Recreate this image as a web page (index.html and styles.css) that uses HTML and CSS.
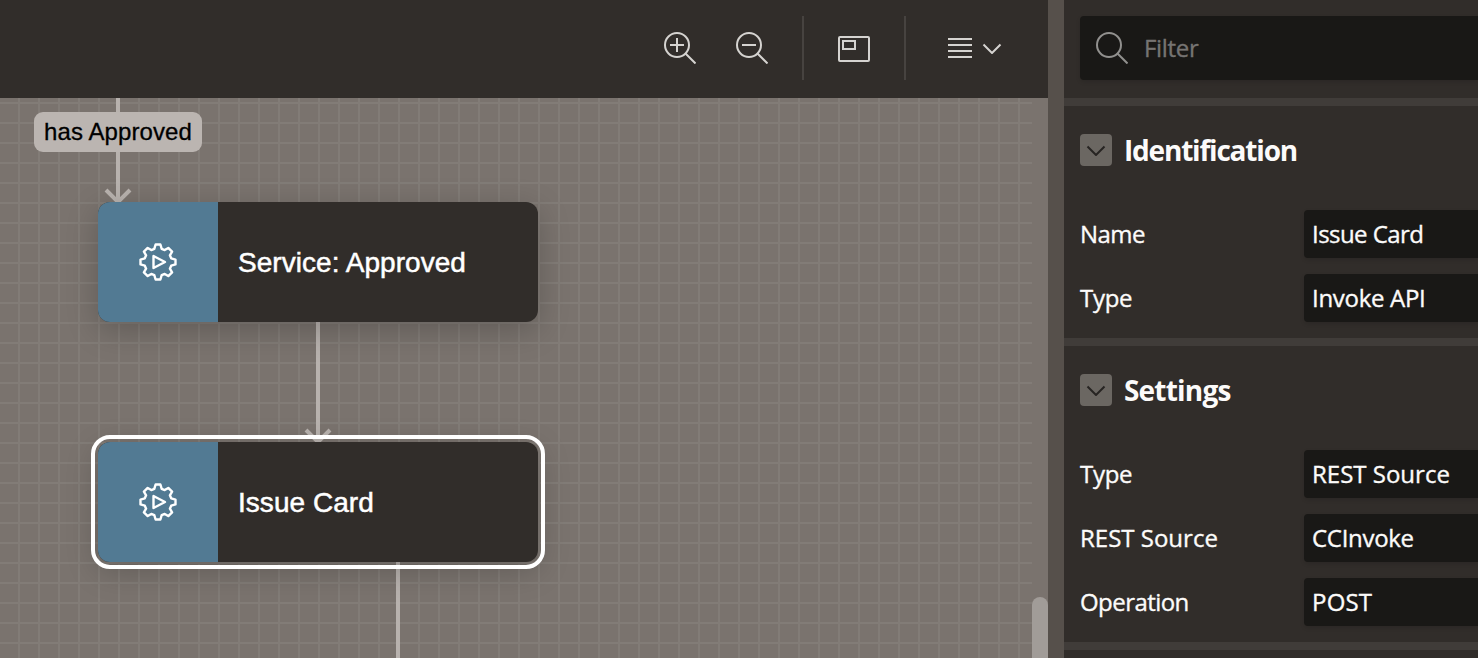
FILE: index.html
```html
<!DOCTYPE html>
<html lang="en">
<head>
<meta charset="utf-8">
<title>Workflow Designer</title>
<link rel="stylesheet" href="styles.css">
</head>
<body>
<svg class="defs" width="0" height="0">
  <defs>
    <symbol id="gear" viewBox="0 0 40 40">
      <path d="M17.600 2.500h4.800l1.300 4.300 3 1.300 3.600-2.200 3.800 3.800-2.200 3.600 1.300 3L37.500 17.600v4.800l-4.300 1.300-1.300 3 2.200 3.600-3.800 3.800-3.600-2.200-3 1.300L22.400 37.500h-4.800l-1.300-4.300-3-1.300-3.600 2.200-3.800-3.800 2.200-3.600-1.300-3L2.500 22.400v-4.800l4.300-1.300 1.300-3-2.200-3.600 3.800-3.800 3.600 2.200 3-1.300z"/>
      <path d="M15.500 14v12L27 20z"/>
    </symbol>
    <symbol id="chevron" viewBox="0 0 20 12"><path d="M1.500 2.500 10 11 18.500 2.500"/></symbol>
  </defs>
</svg>
<div class="app">
  <main class="designer">
    <div class="toolbar">
      <div class="zoom-group">
        <svg class="icon" viewBox="0 0 32 32"><circle cx="13" cy="13" r="12"/><path d="M21.500 21.500 31.500 31.500M6 13h14M13 6v14"/></svg>
        <svg class="icon" viewBox="0 0 32 32"><circle cx="13" cy="13" r="12"/><path d="M21.500 21.500 31.500 31.500M6 13h14"/></svg>
      </div>
      <div class="overview-group">
        <svg class="icon" viewBox="0 0 32 32"><rect x="1" y="5" width="30" height="24" rx="1"/><rect x="5" y="9" width="12" height="8"/></svg>
      </div>
      <div class="menu-group">
        <svg class="menu-lines" viewBox="0 0 24 20"><path d="M0 1h24M0 7h24M0 13h24M0 19h24"/></svg>
        <svg class="chevron"><use href="#chevron"/></svg>
      </div>
    </div>
    <div class="canvas">
      <div class="grid"></div>
      <svg class="links" width="1032" height="560" viewBox="0 98 1032 560">
        <path d="M118 98V200M106 190l12 12 12-12M318 322V440M306 430l12 12 12-12M398 562V658"/>
      </svg>
      <span class="link-label">has Approved</span>
      <div class="node service">
        <div class="node-icon"><svg><use href="#gear"/></svg></div>
        <div class="node-name">Service: Approved</div>
      </div>
      <div class="node issue">
        <div class="node-icon"><svg><use href="#gear"/></svg></div>
        <div class="node-name">Issue Card</div>
      </div>
      <div class="scroll-thumb"></div>
    </div>
  </main>
  <div class="splitter"></div>
  <aside class="properties">
    <div class="filter-bar">
      <div class="filter">
        <svg class="icon" viewBox="0 0 32 32"><circle cx="13" cy="13" r="12"/><path d="M21.500 21.500 31.500 31.500"/></svg>
        <span>Filter</span>
      </div>
    </div>
    <section class="group">
      <h2><i class="toggle"><svg class="chevron"><use href="#chevron"/></svg></i><span class="tight">Identification</span></h2>
      <div class="row"><span class="snug">Name</span><span class="field snug">Issue Card</span></div>
      <div class="row"><span>Type</span><span class="field">Invoke API</span></div>
    </section>
    <section class="group">
      <h2><i class="toggle"><svg class="chevron"><use href="#chevron"/></svg></i><span>Settings</span></h2>
      <div class="row"><span>Type</span><span class="field caps">REST Source</span></div>
      <div class="row"><span class="caps">REST Source</span><span class="field">CCInvoke</span></div>
      <div class="row"><span class="snug">Operation</span><span class="field wide">POST</span></div>
    </section>
    <section class="group"></section>
  </aside>
</div>
</body>
</html>
```

FILE: styles.css
```css
* { box-sizing: border-box; }
body { margin: 0; overflow: hidden; background: #312d2a; }
.defs { position: absolute; }
svg { display: block; fill: none; stroke: currentColor; stroke-width: 2; }
.app { display: flex; width: 1478px; height: 658px; overflow: hidden; }
.designer { flex: 0 0 1048px; display: flex; flex-direction: column; }

.toolbar { height: 98px; padding: 16px 14px 18px 0; display: flex; justify-content: flex-end; background: #312d2a; color: #d5d3d0; }
.toolbar > div { display: flex; align-items: center; height: 64px; }
.icon { width: 32px; height: 32px; flex: none; }
.zoom-group { gap: 40px; padding-right: 34px; border-right: 2px solid #474340; }
.overview-group { padding: 0 34px; border-right: 2px solid #474340; }
.menu-group { padding: 0 32px 0 42px; gap: 10px; }
.menu-lines { width: 24px; height: 20px; }
.chevron { width: 20px; height: 12px; overflow: visible; }

.canvas { position: relative; flex: 1; overflow: hidden; background: #7a736e; }
.grid {
  height: 100%; margin-right: 16px;
  background-image: linear-gradient(#827c77 2px, transparent 2px), linear-gradient(90deg, #827c77 2px, transparent 2px);
  background-size: 20px 20px; background-position: 18px 4px;
}
.links { position: absolute; left: 0; top: 0; color: #b8b2ae; stroke-width: 4; }
.link-label {
  position: absolute; left: 34px; top: 14px; width: 168px; height: 40px; border-radius: 9px;
  background: #bbb5b1; color: #000; text-align: center;
  font: 24px/40px "Liberation Sans", Arial, sans-serif; letter-spacing: .1px;
  -webkit-text-stroke: .3px;
}
.node {
  position: absolute; left: 98px; width: 440px; height: 120px; display: flex; border-radius: 12px;
  background: #312d2a; color: #fff; box-shadow: 0 8px 32px rgba(0, 0, 0, .22);
}
.service { top: 104px; }
.issue { top: 344px; outline: 4px solid #fff; outline-offset: 3px; }
.node-icon { width: 120px; display: grid; place-items: center; background: #527a93; border-radius: 12px 0 0 12px; }
.node-icon svg { width: 40px; height: 40px; stroke-width: 2.4; stroke-linejoin: round; }
.node-name { padding-left: 20px; font: 28px/122px "Liberation Sans", Arial, sans-serif; letter-spacing: .04px; -webkit-text-stroke: .5px; }
.scroll-thumb {
  position: absolute; right: 0; top: 499px; width: 16px; height: 90px; border-radius: 8px;
  background: #a19c98;
}

.splitter { flex: 0 0 16px; background: #56504b; }
.properties { flex: 1; min-width: 0; overflow: hidden; color: #fcfbfa; font: 24px/48px "Open Sans", sans-serif; letter-spacing: -.3px; -webkit-text-stroke: .35px; }
.filter-bar { height: 98px; padding: 16px 0 0 16px; }
.filter { height: 64px; display: flex; align-items: center; gap: 16px; padding-left: 16px; border-radius: 4px 0 0 4px; background: #191816; color: #767472; box-shadow: 0 2px 4px rgba(0, 0, 0, .12); }
.filter .icon { color: #91908e; stroke-width: 2; }
.group { border-top: 8px solid #403c39; padding: 24px 0 16px 16px; }
h2 { margin: 0 0 40px; height: 40px; display: flex; align-items: center; gap: 12px; font-size: 28px; font-weight: 700; letter-spacing: -.8px; -webkit-text-stroke: 0; }
.toggle { width: 32px; height: 32px; display: grid; place-items: center; border-radius: 4px; background: #6b6762; color: #272422; }
.row { display: grid; grid-template-columns: 224px 1fr; height: 48px; white-space: nowrap; }
.row + .row { margin-top: 16px; }
.field { padding-left: 8px; border-radius: 4px 0 0 4px; background: #191816; box-shadow: 0 2px 4px rgba(0, 0, 0, .12); }
.tight { letter-spacing: -1.2px; }
.snug { letter-spacing: -.55px; }
.caps { letter-spacing: 0; }
.wide { letter-spacing: .2px; }
```
